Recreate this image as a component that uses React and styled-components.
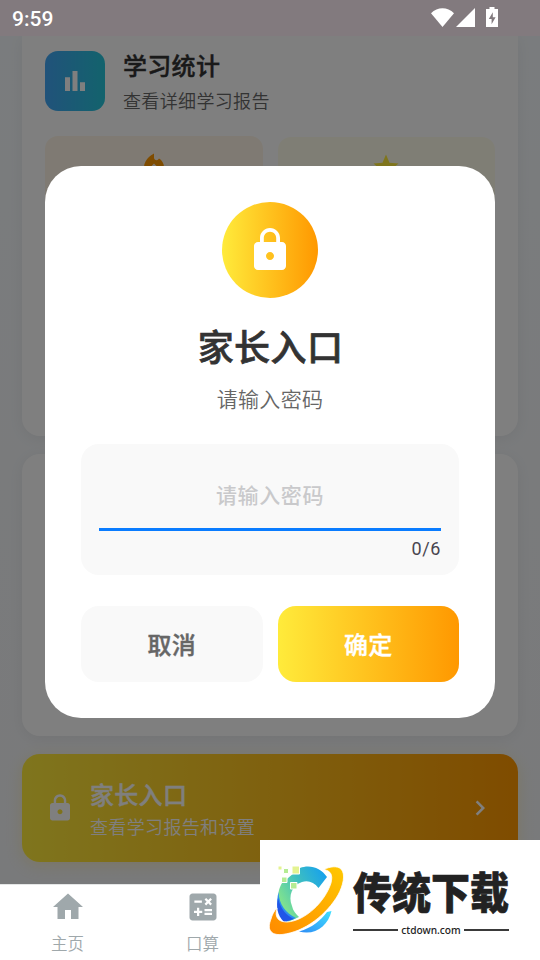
import React from 'react';
import styled, { createGlobalStyle } from 'styled-components';
import { MdLock, MdHome, MdCalculate, MdChevronRight, MdStar } from 'react-icons/md';

const GlobalStyle = createGlobalStyle`
    * {
        box-sizing: border-box;
    }

    body {
        margin: 0;
        font-family: Roboto, "Noto Sans CJK SC", sans-serif;
    }
`;

const Screen = styled.div`
    position: relative;
    display: flex;
    flex-direction: column;
    width: 540px;
    height: 960px;
    overflow: hidden;
    background-color: #fff;
`;

const StatusBar = styled.div`
    display: flex;
    justify-content: space-between;
    align-items: center;
    flex: 0 0 36px;
    padding: 0 41px 0 12px;
    background-color: #827a7e;
    color: #fff;
    font-size: 21px;
    font-weight: 500;

    span {
        padding-top: 2px;
    }

    svg {
        display: block;
    }
`;

const Content = styled.div`
    display: flex;
    flex-direction: column;
    gap: 18px;
    height: 848px;
    padding: 0 22px;
    overflow: hidden;
    background: linear-gradient(to bottom, #f5f9fc, #f3f4f6);
`;

const Card = styled.div`
    flex: 0 0 ${props => props.$height}px;
    padding: 15px 23px;
    border-radius: ${props => props.$first ? '0 0 18px 18px' : '18px'};
    background-color: #fff;
    box-shadow: 0 3px 15px rgba(0, 0, 0, 0.06);
`;

const CardHead = styled.div`
    display: flex;
    align-items: center;
    gap: 18px;
    height: 60px;
`;

const CardIcon = styled.div`
    display: flex;
    align-items: center;
    justify-content: center;
    width: 60px;
    height: 60px;
    border-radius: 13px;
    background: linear-gradient(to right, #42a5f5, #26c6da);
`;

const Heading = styled.div`
    color: ${props => props.$color || '#333'};
    font-size: 24px;
    font-weight: 500;
    line-height: 34px;
    letter-spacing: 0.3px;
    -webkit-text-stroke: 0.4px;
`;

const Caption = styled.div`
    color: ${props => props.$color || '#666'};
    font-size: 18px;
    font-weight: 350;
    line-height: 28px;
    letter-spacing: 0.35px;
`;

const CardText = styled.div`
    padding-top: 4px;

    ${Caption} {
        margin-top: 4px;
    }
`;

const Tiles = styled.div`
    display: grid;
    grid-template-columns: 1fr 1fr;
    gap: 15px;
    margin-top: 25px;
`;

const Tile = styled.div`
    display: flex;
    justify-content: center;
    height: 126px;
    padding-top: 15px;
    border-radius: 13px;
    background-color: ${props => props.$bg};
    color: ${props => props.$color};
    font-size: 30px;

    &:last-child {
        margin-top: 1px;
    }
`;

const ParentCard = styled.div`
    display: flex;
    align-items: center;
    flex: 0 0 108px;
    gap: 15px;
    padding: 0 23px;
    border-radius: 18px;
    background: linear-gradient(to right, #ffeb3b, #ff9800);
    box-shadow: 0 3px 15px rgba(255, 220, 60, 0.25);
    color: #fff;
    font-size: 30px;
`;

const ParentText = styled.div`
    flex: 1;
    padding-top: 5px;

    ${Caption} {
        margin-top: 1px;
    }
`;

const TabBar = styled.div`
    display: grid;
    grid-template-columns: repeat(4, 1fr);
    height: 76px;
    border-top: 1px solid #e4e6e6;
    background-color: #fff;
`;

const Tab = styled.div`
    display: flex;
    flex-direction: column;
    align-items: center;
    padding-top: 4px;
    color: #9fa8ab;
    font-size: 16.5px;
    font-weight: 350;
    line-height: 24px;

    svg {
        font-size: 36px;
        margin-bottom: 8px;
    }
`;

const Overlay = styled.div`
    position: absolute;
    top: 36px;
    left: 0;
    width: 540px;
    height: 848px;
    padding: 130px 45px 0;
    background-color: rgba(0, 0, 0, 0.5);
`;

const Dialog = styled.div`
    display: flex;
    flex-direction: column;
    align-items: center;
    height: 552px;
    padding: 36px;
    border-radius: 36px;
    background-color: #fff;
`;

const LockBadge = styled.div`
    display: flex;
    align-items: center;
    justify-content: center;
    width: 96px;
    height: 96px;
    border-radius: 50%;
    background: linear-gradient(to right, #ffeb3b, #ff9800);
    color: #fff;
    font-size: 48px;
`;

const DialogTitle = styled.div`
    margin-top: 26px;
    padding-left: 1px;
    color: #333;
    font-size: 36px;
    font-weight: 500;
    line-height: 50px;
    letter-spacing: 0.4px;
    -webkit-text-stroke: 0.7px;
`;

const DialogText = styled.div`
    margin-top: 12px;
    color: #666;
    font-size: 21px;
    font-weight: 350;
    line-height: 28px;
    letter-spacing: 0.35px;
`;

const Field = styled.div`
    width: 100%;
    height: 131px;
    margin-top: 30px;
    padding: 30px 18px 0;
    border-radius: 18px;
    background-color: #f9f9f9;
`;

const Placeholder = styled.div`
    height: 56.5px;
    border-bottom: 3px solid #0a7cff;
    color: #c9c9cb;
    font-size: 21px;
    font-weight: 500;
    line-height: 44px;
    letter-spacing: 0.6px;
    text-align: center;
`;

const Counter = styled.div`
    margin-top: 6.5px;
    color: #49454f;
    font-size: 18px;
    line-height: 24px;
    letter-spacing: 0.6px;
    text-align: right;
`;

const Actions = styled.div`
    display: grid;
    grid-template-columns: 1fr 1fr;
    gap: 15px;
    width: 100%;
    margin-top: 30.5px;
`;

const Button = styled.button`
    height: 76.5px;
    padding: 0;
    border: none;
    border-radius: 18px;
    background: ${props => props.$primary ? 'linear-gradient(to right, #ffeb3b, #ff9800)' : '#f9f9f9'};
    color: ${props => props.$primary ? '#fff' : '#666'};
    font-family: inherit;
    font-size: 24px;
    font-weight: 500;
    letter-spacing: 0.3px;
    -webkit-text-stroke: 0.4px;
`;

const Watermark = styled.div`
    position: absolute;
    right: 0;
    bottom: 0;
    display: flex;
    width: 280px;
    height: 120px;
    padding: 20px 0 0 4px;
    background-color: #fff;
`;

const Brand = styled.div`
    width: 156px;
    margin-left: 5px;
    padding-top: 7px;
`;

const BrandName = styled.div`
    height: 46px;
    color: #222;
    font-family: "Noto Sans CJK SC", sans-serif;
    font-size: 39px;
    font-weight: 900;
    line-height: 46px;
    white-space: nowrap;
    transform: scaleY(1.12);
    -webkit-text-stroke: 0.6px #222;
`;

const BrandSite = styled.div`
    display: flex;
    align-items: center;
    gap: 3px;
    margin-top: 9px;
    color: #222;
    font-family: "Noto Sans", sans-serif;
    font-size: 10.2px;
    font-weight: 500;
    line-height: 16px;

    &::before,
    &::after {
        content: '';
        flex: 1;
        height: 2px;
        background-color: #3a3a3a;
    }
`;

const StatusIcons = () => (
    <svg width="68" height="22" viewBox="0 0 68 22" fill="#fff">
        <path d="M0 6.2C6.5-.4 16.5-.4 23 6.2L11.5 20z" />
        <path d="M44 1v19H25z" />
        <path fillRule="evenodd" d="M58.5 0h5v2H67v18H55V2h3.500zM61.800 5.300L57.800 12h2.800v5.200l4-7h-2.800z" />
    </svg>
);

const BarsIcon = () => (
    <svg width="30" height="30" viewBox="0 0 24 24" fill="#fff">
        <path d="M4 9h4v11H4zM10 4h4v16h-4zM16 13h4v7h-4z" />
    </svg>
);

const FlameIcon = () => (
    <svg width="30" height="30" viewBox="0 0 24 24" fill="currentColor">
        <path
            fillRule="evenodd"
            d="M16 6l-.44.55C14.38 8.02 12 7.190 12 5.300V2S4 6 4 13a8 8 0 0 0 16 0c0-2.960-1.610-5.620-4-7zM12 10l-3 2.900c-1 1-1.500 2-1.500 3a4.500 4.500 0 0 0 9 0c0-1-.5-2-1.500-3z"
        />
    </svg>
);

const BrandLogo = () => (
    <svg width="84" height="80" viewBox="0 0 84 80">
        <defs>
            <linearGradient id="ring" x1="0" y1="1" x2="1" y2="0">
                <stop offset="0" stopColor="#ff8a00" />
                <stop offset="1" stopColor="#ffc800" />
            </linearGradient>
            <linearGradient id="arc" x1="0" y1="0.7" x2="1" y2="0.1">
                <stop offset="0" stopColor="#8be886" />
                <stop offset="0.5" stopColor="#3ebfc0" />
                <stop offset="1" stopColor="#149ff0" />
            </linearGradient>
            <linearGradient id="tail" x1="0" y1="1" x2="1" y2="0">
                <stop offset="0" stopColor="#2f8cf5" />
                <stop offset="1" stopColor="#3fe0ff" />
            </linearGradient>
        </defs>
        <path fill="url(#arc)" d="M36 8C46 4 57 8 63 17L54.500 28C50 22 44 20 38 22C28 25 24 36 28 46C29 51 32 54 35 57L24 62C14 52 11 34 18 23z" />
        <path fill="#2b8df0" d="M14.500 32C15 45 22 53 32 58L22 62C13 54 12 42 14.500 32z" />
        <path fill="#2156e8" d="M14 38C17 50 22 55 30 59L20 62C13 55 12 46 14 38z" />
        <path fill="url(#tail)" d="M67.500 51C64 66 51 76 35 71.500C48 68 57 60 63 52z" />
        <path
            fill="url(#ring)"
            stroke="#fff"
            strokeWidth="0.8"
            d="M60 9.500C66 6.500 73 5.500 77 9C82 14 79 26 74 35C63 54 41 72 18 74.500C6 75.500 3 69 7 59C8 55 10 51 13 48C10 58 15 62 23 62C41 61 61 42 67 23C69 15 67 11 60 9.500z"
        />
        <g fill="#e4f391" stroke="#fff" strokeWidth="1">
            <path d="M28 6h7.500v8H28zM14 6h4v4h-4z" />
            <path fill="#b5ec94" d="M19.500 8.500h5v5h-5zM17.500 17h5.500v5.500h-5.500zM26.500 22.500h6.500v6.500h-6.500z" />
        </g>
    </svg>
);

const App = () => {
    return (
        <Screen>
            <GlobalStyle />
            <StatusBar>
                <span>9:59</span>
                <StatusIcons />
            </StatusBar>
            <Content>
                <Card $height={400} $first>
                    <CardHead>
                        <CardIcon>
                            <BarsIcon />
                        </CardIcon>
                        <CardText>
                            <Heading>学习统计</Heading>
                            <Caption>查看详细学习报告</Caption>
                        </CardText>
                    </CardHead>
                    <Tiles>
                        <Tile $bg="#fff5e6" $color="#ff9800">
                            <FlameIcon />
                        </Tile>
                        <Tile $bg="#fffdeb" $color="#ffeb3b">
                            <MdStar />
                        </Tile>
                    </Tiles>
                </Card>
                <Card $height={282} />
                <ParentCard>
                    <MdLock />
                    <ParentText>
                        <Heading $color="#fff">家长入口</Heading>
                        <Caption $color="#fff">查看学习报告和设置</Caption>
                    </ParentText>
                    <MdChevronRight />
                </ParentCard>
            </Content>
            <TabBar>
                <Tab>
                    <MdHome />
                    主页
                </Tab>
                <Tab>
                    <MdCalculate />
                    口算
                </Tab>
            </TabBar>
            <Overlay>
                <Dialog>
                    <LockBadge>
                        <MdLock />
                    </LockBadge>
                    <DialogTitle>家长入口</DialogTitle>
                    <DialogText>请输入密码</DialogText>
                    <Field>
                        <Placeholder>请输入密码</Placeholder>
                        <Counter>0/6</Counter>
                    </Field>
                    <Actions>
                        <Button>取消</Button>
                        <Button $primary>确定</Button>
                    </Actions>
                </Dialog>
            </Overlay>
            <Watermark>
                <BrandLogo />
                <Brand>
                    <BrandName>传统下载</BrandName>
                    <BrandSite>ctdown.com</BrandSite>
                </Brand>
            </Watermark>
        </Screen>
    );
}

export default App;
